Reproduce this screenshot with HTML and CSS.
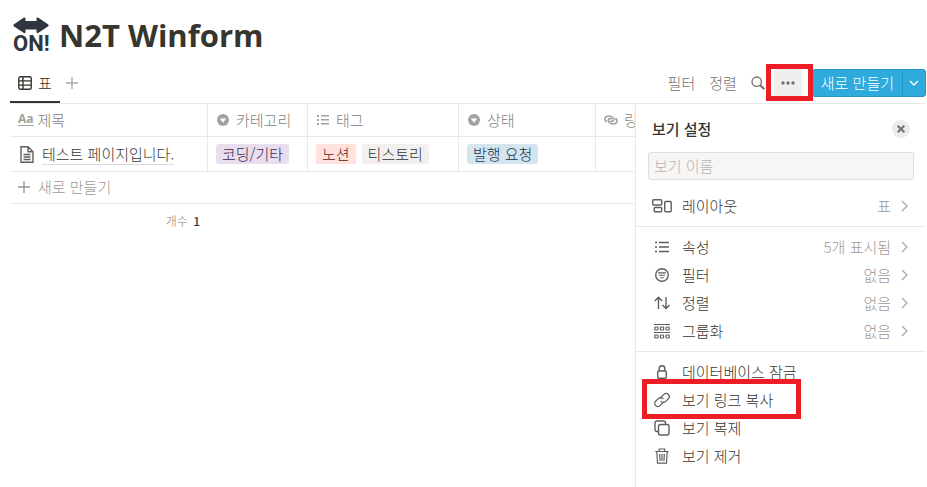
FILE: index.html
```html
<!DOCTYPE html>
<html lang="ko">
<head>
    <meta charset="utf-8">
    <title>N2T Winform</title>
    <link rel="stylesheet" href="styles.css">
</head>
<body>
    <header class="page-header">
      <div class="page-icon">
        <svg width="36" height="17" viewBox="0 0 36 17"><path d="M1 7.200 11 .6Q12.500 0 12.500 1.500V4h11V1.500Q23.500 0 25 .6L35 7.200Q36.500 8.300 35 9.400L25 16Q23.500 16.600 23.500 15V12.500h-11V15Q12.500 16.600 11 16L1 9.400Q-.5 8.300 1 7.200Z"/></svg>
        <span>ON!</span>
      </div>
      <h1>N2T Winform</h1>
    </header>

    <div class="toolbar">
      <nav class="tabs">
        <a class="tab" href="#table">
          <svg class="icon" width="14" height="14" viewBox="0 0 14 14"><rect x=".8" y=".8" width="12.400" height="12.400" rx="1.500"/><path d="M1 4.900h12M1 9.100h12M5 1v12"/></svg>
          표
        </a>
        <button class="add-tab" aria-label="보기 추가"><svg class="icon" width="12" height="12" viewBox="0 0 12 12"><path d="M6 0v12M0 6h12"/></svg></button>
      </nav>
      <div class="actions">
        <button class="text-btn">필터</button>
        <button class="text-btn">정렬</button>
        <button class="search-btn" aria-label="검색"><svg class="icon" width="14" height="14" viewBox="0 0 14 14"><circle cx="5.700" cy="5.700" r="4.700"/><path d="M9.200 9.200 13.300 13.300" stroke-width="2"/></svg></button>
        <div class="more">
          <button class="more-btn" aria-label="더 보기"><svg width="14" height="4" viewBox="0 0 14 4"><circle cx="2" cy="2" r="1.700"/><circle cx="7" cy="2" r="1.700"/><circle cx="12" cy="2" r="1.700"/></svg></button>
          <div class="mark mark-more"></div>
        </div>
        <div class="new-group">
          <button class="new-btn">새로 만들기</button>
          <button class="new-arrow" aria-label="템플릿"><svg class="icon" width="10" height="6" viewBox="0 0 10 6"><path d="M1 1l4 4 4-4"/></svg></button>
        </div>
      </div>
    </div>

    <div class="content">
      <main class="table-wrap">
        <table>
          <colgroup>
            <col class="col-title"><col class="col-category"><col class="col-tag"><col class="col-state"><col class="col-link">
          </colgroup>
          <thead>
            <tr>
              <th><div class="cell title-cell"><span class="aa">Aa</span>제목</div></th>
              <th><div class="cell"><svg class="prop" width="12" height="12" viewBox="0 0 12 12"><circle cx="6" cy="6" r="6"/><path d="M2.800 4.500h6.400L6 8.700z" fill="#fff"/></svg>카테고리</div></th>
              <th><div class="cell"><svg class="prop" width="12" height="10" viewBox="0 0 12 10"><path d="M0 0h2v2H0zM4 0h8v1.500H4zM0 4h2v2H0zM4 4h8v1.500H4zM0 8h2v2H0zM4 8h8v1.500H4z"/></svg>태그</div></th>
              <th><div class="cell"><svg class="prop" width="12" height="12" viewBox="0 0 12 12"><circle cx="6" cy="6" r="6"/><path d="M2.800 4.500h6.400L6 8.700z" fill="#fff"/></svg>상태</div></th>
              <th><div class="cell"><svg class="icon bold" width="14" height="10" viewBox="0 0 14 10"><path d="M2.800 6.800C-.4 4.800 1 1 4.500 1c3 0 5.200 1.700 5.200 3.800 0 1.700-2.400 2.200-3.400.9"/><path d="M11.200 3.200C14.400 5.200 13 9 9.500 9c-3 0-5.200-1.700-5.200-3.800 0-1.700 2.400-2.200 3.400-.9"/></svg>링크</div></th>
            </tr>
          </thead>
          <tbody>
            <tr>
              <td><div class="cell doc"><svg class="icon" width="14" height="17" viewBox="0 0 14 17"><path d="M1 .8h7L13 5.800v10.400H1zM8 .8v5h5M3.500 8.500h7M3.500 11h7M3.500 13.500h7"/></svg><a href="#page">테스트 페이지입니다.</a></div></td>
              <td><div class="tags"><span class="tag purple">코딩/기타</span></div></td>
              <td><div class="tags"><span class="tag red">노션</span><span class="tag gray">티스토리</span></div></td>
              <td><div class="tags"><span class="tag blue">발행 요청</span></div></td>
              <td></td>
            </tr>
          </tbody>
        </table>
        <button class="new-row"><svg class="icon" width="12" height="12" viewBox="0 0 12 12"><path d="M6 0v12M0 6h12"/></svg>새로 만들기</button>
        <div class="count">개수 <b>1</b></div>
      </main>

      <aside class="panel">
        <div class="panel-head">
          <h2>보기 설정</h2>
          <button class="close" aria-label="닫기"><svg class="icon" width="8" height="8" viewBox="0 0 8 8"><path d="M.7.7l6.600 6.600M7.300.7.7 7.300"/></svg></button>
        </div>
        <input class="view-name" type="text" placeholder="보기 이름" aria-label="보기 이름">
        <div class="group">
          <button class="item">
            <span class="item-icon"><svg class="icon" width="20" height="14" viewBox="0 0 20 14"><rect x=".7" y=".7" width="9" height="5.300" rx="1"/><rect x="2.200" y="8.500" width="7.500" height="4.300" rx="1"/><rect x="12.700" y="2.500" width="6.500" height="10.300" rx="1"/></svg></span>
            레이아웃<span class="value">표</span>
            <svg class="icon chevron" width="7" height="12" viewBox="0 0 7 12"><path d="M1 1l5 5-5 5"/></svg>
          </button>
        </div>
        <div class="group">
          <button class="item">
            <span class="item-icon"><svg class="icon" width="14" height="12" viewBox="0 0 14 12"><path d="M0 1.500h2M4 1.500h10M0 6h2M4 6h10M0 10.500h2M4 10.500h10"/></svg></span>
            속성<span class="value">5개 표시됨</span>
            <svg class="icon chevron" width="7" height="12" viewBox="0 0 7 12"><path d="M1 1l5 5-5 5"/></svg>
          </button>
          <button class="item">
            <span class="item-icon"><svg class="icon" width="14" height="14" viewBox="0 0 14 14"><circle cx="7" cy="7" r="6.300"/><path d="M3 4.900h8M4 7.300h6M5.300 9.700h3.400" stroke-width="1.100"/></svg></span>
            필터<span class="value">없음</span>
            <svg class="icon chevron" width="7" height="12" viewBox="0 0 7 12"><path d="M1 1l5 5-5 5"/></svg>
          </button>
          <button class="item">
            <span class="item-icon"><svg class="icon" width="16" height="14" viewBox="0 0 16 14"><path d="M4.500 13V1.500M.8 5l3.700-3.700L8.200 5M12 1v11.500M8.500 9l3.500 3.600L15.500 9"/></svg></span>
            정렬<span class="value">없음</span>
            <svg class="icon chevron" width="7" height="12" viewBox="0 0 7 12"><path d="M1 1l5 5-5 5"/></svg>
          </button>
          <button class="item">
            <span class="item-icon"><svg class="icon thin" width="16" height="16" viewBox="0 0 16 16"><path d="M0 1.500h16M0 9.500h16"/><rect x=".8" y="4" width="3.200" height="3" rx=".8"/><rect x="6.400" y="4" width="3.200" height="3" rx=".8"/><rect x="12" y="4" width="3.200" height="3" rx=".8"/><rect x=".8" y="12" width="3.200" height="3" rx=".8"/><rect x="6.400" y="12" width="3.200" height="3" rx=".8"/><rect x="12" y="12" width="3.200" height="3" rx=".8"/></svg></span>
            그룹화<span class="value">없음</span>
            <svg class="icon chevron" width="7" height="12" viewBox="0 0 7 12"><path d="M1 1l5 5-5 5"/></svg>
          </button>
        </div>
        <div class="group">
          <button class="item">
            <span class="item-icon"><svg class="icon" width="10" height="14" viewBox="0 0 10 14"><rect x=".7" y="6" width="8.600" height="7.300" rx="1"/><path d="M2.200 6V3.500a2.800 2.800 0 0 1 5.600 0V6"/></svg></span>
            데이터베이스 잠금
          </button>
          <div class="marked">
            <button class="item">
              <span class="item-icon"><svg class="icon thin" width="16" height="16" viewBox="0 0 16 16"><g transform="rotate(-45 8 8)"><path d="M8.500 10.600H2.600a3 3 0 0 1-3-3V7.400a3 3 0 0 1 3-3h4a3 3 0 0 1 3 3v1"/><path d="M7.500 5.400h5.900a3 3 0 0 1 3 3v.2a3 3 0 0 1-3 3h-4a3 3 0 0 1-3-3v-1"/></g></svg></span>
              보기 링크 복사
            </button>
            <div class="mark mark-link"></div>
          </div>
          <button class="item">
            <span class="item-icon"><svg class="icon" width="16" height="16" viewBox="0 0 16 16"><rect x="4.500" y="4.500" width="10.500" height="10.500" rx="2"/><path d="M4.500 11.500H3a2 2 0 0 1-2-2V3a2 2 0 0 1 2-2h6.500a2 2 0 0 1 2 2v1.500"/></svg></span>
            보기 복제
          </button>
          <button class="item">
            <span class="item-icon"><svg class="icon thin" width="14" height="16" viewBox="0 0 14 16"><path d="M.3 3.500h13.400M4.300 3.500V1h5.400v2.500M1.800 3.500l.7 11.700h9l.7-11.700M4.700 6l.3 7M7 6v7M9.300 6 9 13"/></svg></span>
            보기 제거
          </button>
        </div>
      </aside>
    </div>
</body>
</html>
```
FILE: styles.css
```css
* {
  margin: 0;
  padding: 0;
  box-sizing: border-box;
}

body {
  min-height: 100vh;
  display: flex;
  flex-direction: column;
  padding: 0 1px 0 10px;
  background-color: #fff;
  color: #37352f;
  font-family: "Noto Sans CJK KR", sans-serif;
  font-size: 15px;
  font-weight: 300;
  line-height: 20px;
}

button,
input {
  border: none;
  background: none;
  color: inherit;
  font: inherit;
}

button {
  cursor: pointer;
}

a {
  color: inherit;
  text-decoration: none;
}

svg {
  display: block;
  flex-shrink: 0;
  overflow: visible;
}

.icon {
  fill: none;
  stroke: currentColor;
  stroke-width: 1.4;
}

.thin {
  stroke-width: 1.2;
}

.bold {
  stroke-width: 1.7;
}

/* title */
.page-header {
  display: flex;
  align-items: center;
  gap: 8px;
  height: 66px;
  padding: 4px 0 0 3px;
}

.page-icon {
  width: 38px;
  color: #2f363d;
  fill: #2f363d;
  font: bold 22px/20px Roboto, sans-serif;
}

h1 {
  font: bold 31px/40px "Open Sans", sans-serif;
}

/* toolbar */
.toolbar {
  display: flex;
  justify-content: space-between;
  height: 38px;
  border-bottom: 1px solid #e9e9e7;
}

.tabs,
.actions,
.tab,
.cell,
.tags {
  display: flex;
  align-items: center;
}

.tabs,
.actions {
  height: 34px;
}

.tabs {
  height: 37px;
}

.tab {
  height: 37px;
  gap: 6px;
  padding: 0 8px 2px;
  border-bottom: 2px solid #37352f;
}

.add-tab {
  padding: 4px 6px 8px;
  color: #acaba9;
}

.actions {
  color: #73726e;
}

.text-btn {
  padding: 0 7px;
}

.search-btn {
  padding: 7px 9px 7px 7px;
}

.more,
.marked {
  position: relative;
}

.more-btn {
  display: flex;
  align-items: center;
  justify-content: center;
  width: 28px;
  height: 28px;
  border-radius: 3px;
  background-color: #efefee;
  fill: #73726e;
}

/* red callout frames */
.mark {
  position: absolute;
  border: 5px solid #ee1c25;
  pointer-events: none;
}

.mark-more {
  top: -5px;
  left: -8px;
  width: 47px;
  height: 37px;
}

.mark-link {
  top: -7px;
  left: 6px;
  width: 159px;
  height: 40px;
}

.new-group {
  display: flex;
  height: 28px;
  margin-left: 10px;
  border: 1px solid #2496c8;
  border-radius: 3px;
  background-color: #2eaadc;
  color: #fff;
}

.new-btn {
  padding: 0 8px;
}

.new-arrow {
  padding: 0 6px;
  border-left: 1px solid #2496c8;
}

/* table */
.content {
  flex: 1;
  display: flex;
}

.table-wrap {
  flex: 1;
  min-width: 0;
  overflow: hidden;
}

table {
  width: 786px;
  table-layout: fixed;
  border-spacing: 0;
}

.col-title {
  width: 198px;
}

.col-category {
  width: 100px;
}

.col-tag {
  width: 151px;
}

.col-state {
  width: 137px;
}

.col-link {
  width: 200px;
}

th,
td {
  border-bottom: 1px solid #e9e9e7;
  border-right: 1px solid #e9e9e7;
  text-align: left;
}

th {
  height: 33px;
  padding-bottom: 1px;
  color: #82817d;
  font-weight: 300;
}

td {
  height: 35px;
}

.cell {
  gap: 6px;
  padding: 0 8px;
}

.cell .icon {
  color: #a3a29e;
}

.prop {
  fill: #a3a29e;
  margin: 0 1px;
}

.title-cell {
  gap: 4px;
}

.aa {
  border-bottom: 1px solid #a3a29e;
  color: #a3a29e;
  font: bold 12px/12px "Open Sans", sans-serif;
}

.doc {
  gap: 8px;
  padding-left: 10px;
}

.doc .icon {
  color: #5f5e5a;
}

.doc a {
  border-bottom: 1px solid #dcdbd9;
}

.tags {
  gap: 6px;
  padding: 0 8px;
}

.tag {
  padding: 0 6px;
  border-radius: 3px;
}

.purple {
  background-color: #e8deee;
  color: #412454;
}

.red {
  background-color: #ffe2dd;
  color: #5d1715;
}

.gray {
  background-color: #f1f0ef;
  color: #32302c;
}

.blue {
  background-color: #d3e5ef;
  color: #183347;
}

.new-row {
  display: flex;
  align-items: center;
  gap: 8px;
  width: 100%;
  height: 32px;
  padding: 0 0 1px 8px;
  border-bottom: 1px solid #e9e9e7;
  color: #9b9a97;
}

.count {
  width: 198px;
  padding: 7px 8px;
  color: #82817d;
  font-size: 12px;
  text-align: right;
}

.count b {
  margin-left: 2px;
  color: #37352f;
  font-weight: 500;
}

/* view settings */
.panel {
  width: 291px;
  border-left: 1px solid #e9e9e7;
}

.panel-head {
  display: flex;
  justify-content: space-between;
  align-items: center;
  height: 48px;
  padding: 1px 16px 0;
}

h2 {
  font-size: 15px;
  font-weight: 500;
}

.close {
  display: flex;
  align-items: center;
  justify-content: center;
  width: 18px;
  height: 18px;
  border-radius: 50%;
  background-color: #ebebea;
  color: #73726e;
}

.close .icon {
  stroke-width: 2;
}

.view-name {
  display: block;
  width: calc(100% - 24px);
  height: 28px;
  margin: 0 12px 6px;
  padding: 0 5px 2px;
  border: 1px solid #dededc;
  border-radius: 3px;
  background-color: #f7f6f5;
}

.view-name::placeholder {
  color: #b4b3b0;
}

.group {
  padding: 6px 0;
}

.group + .group {
  border-top: 1px solid #e9e9e7;
}

.item {
  display: flex;
  align-items: center;
  width: 100%;
  height: 28px;
  padding: 0 18px 1px 16px;
}

.item-icon {
  display: flex;
  justify-content: center;
  width: 20px;
  margin-right: 10px;
  color: #5f5e5a;
}

.value {
  margin-left: auto;
  color: #9b9a97;
}

.chevron {
  margin-left: 10px;
  color: #acaba9;
}
```
